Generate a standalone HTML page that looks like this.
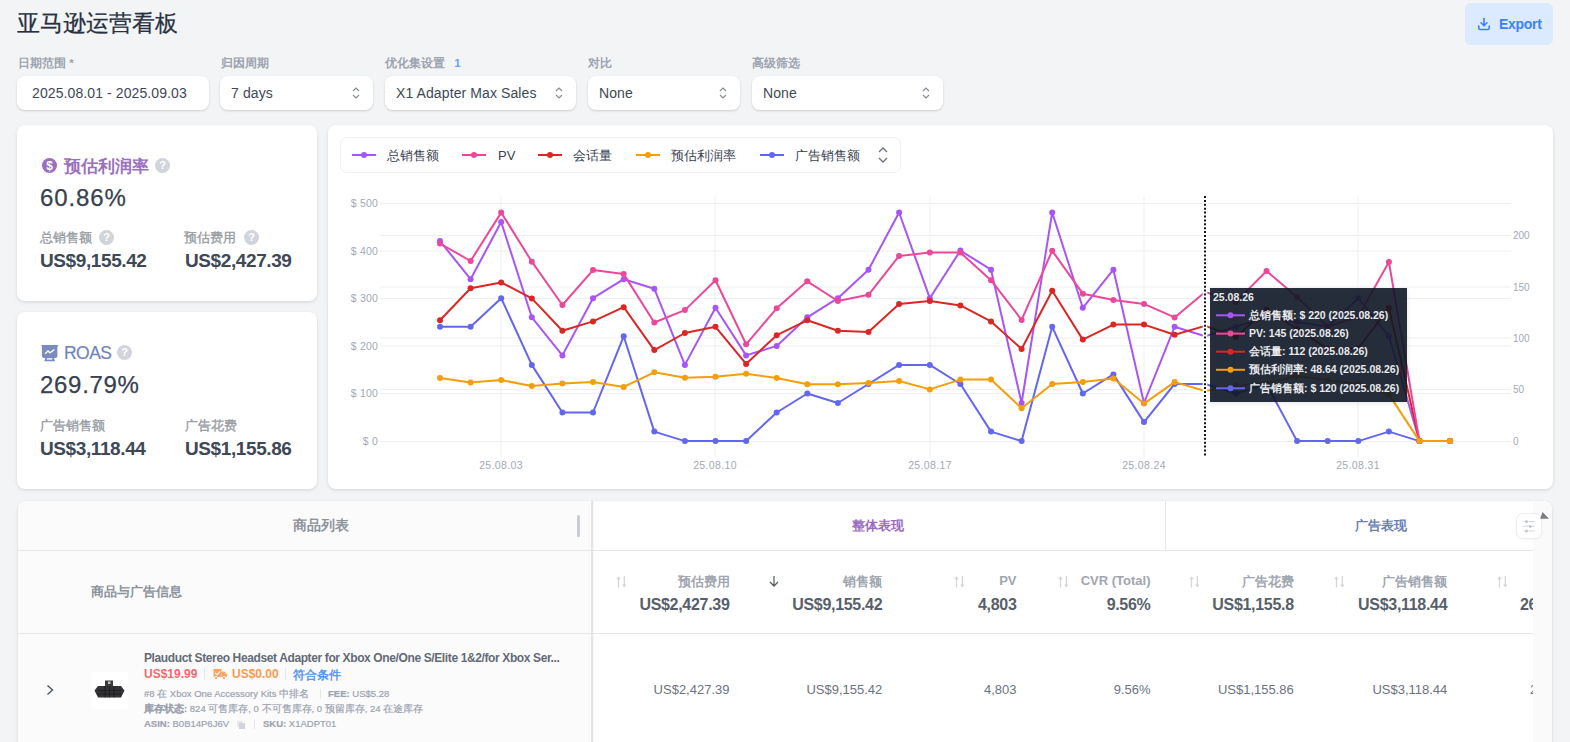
<!DOCTYPE html>
<html><head><meta charset="utf-8">
<style>
*{box-sizing:border-box;margin:0;padding:0}
html,body{width:1570px;height:742px;overflow:hidden;background:#f3f4f6;font-family:"Liberation Sans",sans-serif;color:#374151}
.a{position:absolute;white-space:nowrap}
.card{position:absolute;background:#fff;border-radius:8px;box-shadow:0 1px 3px rgba(0,0,0,.09),0 2px 6px rgba(0,0,0,.04)}
.lbl{font-size:11.5px;color:#9ca3af;font-weight:bold}
.inp{position:absolute;top:76px;height:34px;background:#fff;border-radius:8px;box-shadow:0 1px 3px rgba(0,0,0,.10),0 1px 2px rgba(0,0,0,.06);font-size:14px;color:#404856;line-height:34px;padding-left:15px;letter-spacing:0.1px}
.chev{position:absolute;right:12px;top:10px}
.q{display:inline-block;width:15px;height:15px;border-radius:50%;background:#d1d5db;color:#fff;font-size:11px;font-weight:bold;text-align:center;line-height:15px}
.ax{font-size:10px;color:#9ca3af}
.leg{font-size:13px;color:#374151}
.th{font-size:13px;font-weight:bold;color:#a0a6b0}
.tv{font-size:16px;font-weight:bold;color:#575f6b;letter-spacing:-0.3px}
.td{font-size:13px;color:#6b7280}
.sort{font-size:12px;color:#c0c4cc}
</style></head><body>

<div class="a" style="left:17px;top:8px;font-size:23.3px;color:#273140;line-height:30.5px;-webkit-text-stroke:0.25px #273140">亚马逊运营看板</div>

<div class="a" style="left:1465px;top:3px;width:88px;height:42px;background:#dbeafe;border-radius:6px"></div>
<svg class="a" style="left:1477px;top:17px" width="14" height="14" viewBox="0 0 14 14"><path d="M7 1.5v7M4 5.8l3 3 3-3M1.8 9v2.2c0 .8.5 1.3 1.3 1.3h7.8c.8 0 1.3-.5 1.3-1.3V9" fill="none" stroke="#3b82f6" stroke-width="1.6" stroke-linecap="round" stroke-linejoin="round"/></svg>
<div class="a" style="left:1499px;top:15px;font-size:14px;font-weight:bold;color:#3b82f6;line-height:18px;letter-spacing:-0.3px">Export</div>

<!-- filters -->
<div class="a lbl" style="left:18px;top:56px">日期范围 *</div>
<div class="a lbl" style="left:221px;top:56px">归因周期</div>
<div class="a lbl" style="left:385px;top:56px">优化集设置 <span style="color:#6fa0f5;margin-left:6px">1</span></div>
<div class="a lbl" style="left:588px;top:56px">对比</div>
<div class="a lbl" style="left:752px;top:56px">高级筛选</div>

<div class="inp" style="left:17px;width:192px">2025.08.01 - 2025.09.03</div>
<div class="inp" style="left:220px;width:153px;padding-left:11px">7 days<svg class="chev" width="10" height="14" viewBox="0 0 10 14"><path d="M2 5l3-3 3 3M2 9l3 3 3-3" fill="none" stroke="#858c96" stroke-width="1.2"/></svg></div>
<div class="inp" style="left:385px;width:191px;padding-left:11px">X1 Adapter Max Sales<svg class="chev" width="10" height="14" viewBox="0 0 10 14"><path d="M2 5l3-3 3 3M2 9l3 3 3-3" fill="none" stroke="#858c96" stroke-width="1.2"/></svg></div>
<div class="inp" style="left:588px;width:152px;padding-left:11px">None<svg class="chev" width="10" height="14" viewBox="0 0 10 14"><path d="M2 5l3-3 3 3M2 9l3 3 3-3" fill="none" stroke="#858c96" stroke-width="1.2"/></svg></div>
<div class="inp" style="left:752px;width:191px;padding-left:11px">None<svg class="chev" width="10" height="14" viewBox="0 0 10 14"><path d="M2 5l3-3 3 3M2 9l3 3 3-3" fill="none" stroke="#858c96" stroke-width="1.2"/></svg></div>

<!-- profit card -->
<div class="card" style="left:17px;top:125px;width:300px;height:176px"></div>
<svg class="a" style="left:42px;top:158px" width="15" height="15" viewBox="0 0 15 15"><circle cx="7.5" cy="7.5" r="7.5" fill="#9a6fc0"/><text x="7.5" y="11.8" font-size="12" font-weight="bold" fill="#fff" text-anchor="middle" font-family="Liberation Sans">$</text></svg>
<div class="a" style="left:63.5px;top:156px;font-size:17.3px;font-weight:bold;color:#9a6fc0;line-height:20px">预估利润率</div>
<div class="a q" style="left:155px;top:158px">?</div>
<div class="a" style="left:40px;top:184px;font-size:24px;color:#374151;line-height:28px;letter-spacing:0.9px;-webkit-text-stroke:0.25px #374151">60.86%</div>
<div class="a" style="left:40px;top:229px;font-size:13px;color:#979ca5;line-height:17px;-webkit-text-stroke:0.35px #979ca5">总销售额</div>
<div class="a q" style="left:99px;top:230px">?</div>
<div class="a" style="left:40px;top:250px;font-size:19px;font-weight:bold;color:#3e4856;line-height:22px;letter-spacing:-0.4px">US$9,155.42</div>
<div class="a" style="left:184px;top:229px;font-size:13px;color:#979ca5;line-height:17px;-webkit-text-stroke:0.35px #979ca5">预估费用</div>
<div class="a q" style="left:244px;top:230px">?</div>
<div class="a" style="left:185px;top:250px;font-size:19px;font-weight:bold;color:#3e4856;line-height:22px;letter-spacing:-0.4px">US$2,427.39</div>

<!-- roas card -->
<div class="card" style="left:17px;top:312px;width:300px;height:177px"></div>
<svg class="a" style="left:41px;top:344px" width="18" height="18" viewBox="0 0 18 18"><rect x="0.4" y="1" width="16.7" height="1.3" fill="#7a8bc0"/><path d="M1 2H16.4V12Q16.4 14 14.4 14H3Q1 14 1 12Z" fill="#7a8bc0"/><path d="M4 9.8L7 7L9 8.8L13.4 5.4" fill="none" stroke="#fff" stroke-width="1.3"/><path d="M4.3 14H13L14 17.3H3.3Z" fill="#7a8bc0"/><rect x="5.9" y="14.2" width="5.4" height="1.4" fill="#fff"/></svg>
<div class="a" style="left:64px;top:343px;font-size:17.5px;color:#7283bb;line-height:20px;letter-spacing:-0.55px;-webkit-text-stroke:0.2px #7283bb">ROAS</div>
<div class="a q" style="left:117px;top:345px">?</div>
<div class="a" style="left:40px;top:371px;font-size:24px;color:#374151;line-height:28px;letter-spacing:0.7px;-webkit-text-stroke:0.25px #374151">269.79%</div>
<div class="a" style="left:40px;top:417px;font-size:13px;color:#979ca5;line-height:17px;-webkit-text-stroke:0.35px #979ca5">广告销售额</div>
<div class="a" style="left:40px;top:438px;font-size:19px;font-weight:bold;color:#3e4856;line-height:22px;letter-spacing:-0.4px">US$3,118.44</div>
<div class="a" style="left:185px;top:417px;font-size:13px;color:#979ca5;line-height:17px;-webkit-text-stroke:0.35px #979ca5">广告花费</div>
<div class="a" style="left:185px;top:438px;font-size:19px;font-weight:bold;color:#3e4856;line-height:22px;letter-spacing:-0.4px">US$1,155.86</div>

<!-- chart card -->
<div class="card" style="left:328px;top:125px;width:1225px;height:364px"></div>
<div class="a" style="left:340px;top:137px;width:561px;height:36px;border:1px solid #eef0f3;border-radius:7px"></div>

<svg class="a" style="left:0;top:0" width="1570" height="500" viewBox="0 0 1570 500"><defs><filter id="blur" x="-10%" y="-10%" width="120%" height="120%"><feGaussianBlur stdDeviation="2"/></filter></defs>
<g stroke="#eeeff2" stroke-width="1">
<path d="M380 203.5H1511M380 251H1511M380 298.5H1511M380 346H1511M380 393.5H1511M380 441.5H1511"/>
<path d="M380 235.5H1511M380 287H1511M380 338H1511M380 389.5H1511"/>
<path d="M501 196V457M715 196V457M930 196V457M1144 196V457M1358 196V457"/>
</g>
<g font-family="Liberation Sans" font-size="10.5" fill="#a3a9b4" text-anchor="end" letter-spacing="0.2">
<text x="378" y="207">$ 500</text><text x="378" y="255">$ 400</text><text x="378" y="302">$ 300</text><text x="378" y="350">$ 200</text><text x="378" y="397">$ 100</text><text x="378" y="445">$ 0</text>
</g>
<g font-family="Liberation Sans" font-size="10" fill="#a3a9b4">
<text x="1513" y="239">200</text><text x="1513" y="291">150</text><text x="1513" y="342">100</text><text x="1513" y="393">50</text><text x="1513" y="445">0</text>
</g>
<g font-family="Liberation Sans" font-size="10.5" fill="#a3a9b4" text-anchor="middle" letter-spacing="0.35" style="-webkit-text-stroke:0.2px #a3a9b4">
<text x="501" y="469">25.08.03</text><text x="715" y="469">25.08.10</text><text x="930" y="469">25.08.17</text><text x="1144" y="469">25.08.24</text><text x="1358" y="469">25.08.31</text>
</g>
<!-- legend -->
<g stroke-width="2">
<path d="M352 155h24" stroke="#a855f7"/><circle cx="364" cy="155" r="3" fill="#a855f7"/>
<path d="M462 155h24" stroke="#ec4899"/><circle cx="474" cy="155" r="3" fill="#ec4899"/>
<path d="M538 155h24" stroke="#dc2626"/><circle cx="550" cy="155" r="3" fill="#dc2626"/>
<path d="M636 155h24" stroke="#f59e0b"/><circle cx="648" cy="155" r="3" fill="#f59e0b"/>
<path d="M760 155h24" stroke="#6366f1"/><circle cx="772" cy="155" r="3" fill="#6366f1"/>
</g>
<g font-family="Liberation Sans" font-size="13" fill="#374151">
<text x="387" y="160">总销售额</text><text x="498" y="160">PV</text><text x="573" y="160">会话量</text><text x="671" y="160">预估利润率</text><text x="795" y="160">广告销售额</text>
</g>
<path d="M879 152l4-4 4 4M879 158l4 4 4-4" fill="none" stroke="#6b7280" stroke-width="1.3"/>
<g fill="#6366f1"><polyline points="440.0,326.8 470.6,326.8 501.2,298.2 531.8,364.9 562.4,412.5 593.0,412.5 623.7,336.3 654.3,431.6 684.9,441.1 715.5,441.1 746.1,441.1 776.7,412.5 807.3,393.5 837.9,403.0 868.5,384.0 899.1,364.9 929.8,364.9 960.4,384.0 991.0,431.6 1021.6,441.1 1052.2,326.8 1082.8,393.5 1113.4,374.4 1144.0,422.1 1174.6,384.0 1205.2,384.0 1235.9,393.5 1266.5,384.0 1297.1,441.1 1327.7,441.1 1358.3,441.1 1388.9,431.6 1419.5,441.1 1450.1,441.1" fill="none" stroke="#6366f1" stroke-width="2" stroke-linejoin="round"/><circle cx="440.0" cy="326.8" r="3"/><circle cx="470.6" cy="326.8" r="3"/><circle cx="501.2" cy="298.2" r="3"/><circle cx="531.8" cy="364.9" r="3"/><circle cx="562.4" cy="412.5" r="3"/><circle cx="593.0" cy="412.5" r="3"/><circle cx="623.7" cy="336.3" r="3"/><circle cx="654.3" cy="431.6" r="3"/><circle cx="684.9" cy="441.1" r="3"/><circle cx="715.5" cy="441.1" r="3"/><circle cx="746.1" cy="441.1" r="3"/><circle cx="776.7" cy="412.5" r="3"/><circle cx="807.3" cy="393.5" r="3"/><circle cx="837.9" cy="403.0" r="3"/><circle cx="868.5" cy="384.0" r="3"/><circle cx="899.1" cy="364.9" r="3"/><circle cx="929.8" cy="364.9" r="3"/><circle cx="960.4" cy="384.0" r="3"/><circle cx="991.0" cy="431.6" r="3"/><circle cx="1021.6" cy="441.1" r="3"/><circle cx="1052.2" cy="326.8" r="3"/><circle cx="1082.8" cy="393.5" r="3"/><circle cx="1113.4" cy="374.4" r="3"/><circle cx="1144.0" cy="422.1" r="3"/><circle cx="1174.6" cy="384.0" r="3"/><circle cx="1235.9" cy="393.5" r="3"/><circle cx="1266.5" cy="384.0" r="3"/><circle cx="1297.1" cy="441.1" r="3"/><circle cx="1327.7" cy="441.1" r="3"/><circle cx="1358.3" cy="441.1" r="3"/><circle cx="1388.9" cy="431.6" r="3"/><circle cx="1419.5" cy="441.1" r="3"/><circle cx="1450.1" cy="441.1" r="3"/></g>
<g fill="#a855f7"><polyline points="440.0,241.1 470.6,279.2 501.2,222.0 531.8,317.3 562.4,355.4 593.0,298.2 623.7,279.2 654.3,288.7 684.9,364.9 715.5,307.8 746.1,355.4 776.7,345.9 807.3,317.3 837.9,298.2 868.5,269.7 899.1,212.5 929.8,298.2 960.4,250.6 991.0,269.7 1021.6,403.0 1052.2,212.5 1082.8,307.8 1113.4,269.7 1144.0,403.0 1174.6,326.8 1205.2,336.3 1235.9,326.8 1266.5,317.3 1297.1,322.1 1327.7,326.8 1358.3,298.2 1388.9,336.3 1419.5,441.1 1450.1,441.1" fill="none" stroke="#a855f7" stroke-width="2" stroke-linejoin="round"/><circle cx="440.0" cy="241.1" r="3"/><circle cx="470.6" cy="279.2" r="3"/><circle cx="501.2" cy="222.0" r="3"/><circle cx="531.8" cy="317.3" r="3"/><circle cx="562.4" cy="355.4" r="3"/><circle cx="593.0" cy="298.2" r="3"/><circle cx="623.7" cy="279.2" r="3"/><circle cx="654.3" cy="288.7" r="3"/><circle cx="684.9" cy="364.9" r="3"/><circle cx="715.5" cy="307.8" r="3"/><circle cx="746.1" cy="355.4" r="3"/><circle cx="776.7" cy="345.9" r="3"/><circle cx="807.3" cy="317.3" r="3"/><circle cx="837.9" cy="298.2" r="3"/><circle cx="868.5" cy="269.7" r="3"/><circle cx="899.1" cy="212.5" r="3"/><circle cx="929.8" cy="298.2" r="3"/><circle cx="960.4" cy="250.6" r="3"/><circle cx="991.0" cy="269.7" r="3"/><circle cx="1021.6" cy="403.0" r="3"/><circle cx="1052.2" cy="212.5" r="3"/><circle cx="1082.8" cy="307.8" r="3"/><circle cx="1113.4" cy="269.7" r="3"/><circle cx="1144.0" cy="403.0" r="3"/><circle cx="1174.6" cy="326.8" r="3"/><circle cx="1235.9" cy="326.8" r="3"/><circle cx="1266.5" cy="317.3" r="3"/><circle cx="1297.1" cy="322.1" r="3"/><circle cx="1327.7" cy="326.8" r="3"/><circle cx="1358.3" cy="298.2" r="3"/><circle cx="1388.9" cy="336.3" r="3"/><circle cx="1419.5" cy="441.1" r="3"/><circle cx="1450.1" cy="441.1" r="3"/></g>
<g fill="#dc2626"><polyline points="440.0,320.3 470.6,288.3 501.2,282.4 531.8,298.4 562.4,330.8 593.0,321.4 623.7,307.2 654.3,350.1 684.9,333.0 715.5,326.8 746.1,363.9 776.7,335.2 807.3,320.3 837.9,330.8 868.5,331.9 899.1,303.9 929.8,301.0 960.4,305.4 991.0,321.4 1021.6,349.0 1052.2,290.8 1082.8,339.6 1113.4,324.6 1144.0,324.6 1174.6,334.8 1205.2,325.9 1235.9,336.9 1266.5,309.8 1297.1,329.0 1327.7,348.6 1358.3,348.3 1388.9,308.0 1419.5,441.1 1450.1,441.1" fill="none" stroke="#dc2626" stroke-width="2" stroke-linejoin="round"/><circle cx="440.0" cy="320.3" r="3"/><circle cx="470.6" cy="288.3" r="3"/><circle cx="501.2" cy="282.4" r="3"/><circle cx="531.8" cy="298.4" r="3"/><circle cx="562.4" cy="330.8" r="3"/><circle cx="593.0" cy="321.4" r="3"/><circle cx="623.7" cy="307.2" r="3"/><circle cx="654.3" cy="350.1" r="3"/><circle cx="684.9" cy="333.0" r="3"/><circle cx="715.5" cy="326.8" r="3"/><circle cx="746.1" cy="363.9" r="3"/><circle cx="776.7" cy="335.2" r="3"/><circle cx="807.3" cy="320.3" r="3"/><circle cx="837.9" cy="330.8" r="3"/><circle cx="868.5" cy="331.9" r="3"/><circle cx="899.1" cy="303.9" r="3"/><circle cx="929.8" cy="301.0" r="3"/><circle cx="960.4" cy="305.4" r="3"/><circle cx="991.0" cy="321.4" r="3"/><circle cx="1021.6" cy="349.0" r="3"/><circle cx="1052.2" cy="290.8" r="3"/><circle cx="1082.8" cy="339.6" r="3"/><circle cx="1113.4" cy="324.6" r="3"/><circle cx="1144.0" cy="324.6" r="3"/><circle cx="1174.6" cy="334.8" r="3"/><circle cx="1235.9" cy="336.9" r="3"/><circle cx="1266.5" cy="309.8" r="3"/><circle cx="1297.1" cy="329.0" r="3"/><circle cx="1327.7" cy="348.6" r="3"/><circle cx="1358.3" cy="348.3" r="3"/><circle cx="1388.9" cy="308.0" r="3"/><circle cx="1419.5" cy="441.1" r="3"/><circle cx="1450.1" cy="441.1" r="3"/></g>
<g fill="#ec4899"><polyline points="440.0,243.5 470.6,261.0 501.2,212.6 531.8,261.7 562.4,305.0 593.0,270.1 623.7,274.1 654.3,322.5 684.9,310.1 715.5,280.2 746.1,344.3 776.7,308.3 807.3,281.3 837.9,301.0 868.5,294.8 899.1,255.9 929.8,252.6 960.4,252.6 991.0,280.2 1021.6,319.9 1052.2,250.8 1082.8,293.7 1113.4,299.9 1144.0,303.9 1174.6,317.4 1205.2,292.0 1235.9,301.9 1266.5,271.0 1297.1,297.0 1327.7,326.7 1358.3,316.5 1388.9,262.0 1419.5,441.1 1450.1,441.1" fill="none" stroke="#ec4899" stroke-width="2" stroke-linejoin="round"/><circle cx="440.0" cy="243.5" r="3"/><circle cx="470.6" cy="261.0" r="3"/><circle cx="501.2" cy="212.6" r="3"/><circle cx="531.8" cy="261.7" r="3"/><circle cx="562.4" cy="305.0" r="3"/><circle cx="593.0" cy="270.1" r="3"/><circle cx="623.7" cy="274.1" r="3"/><circle cx="654.3" cy="322.5" r="3"/><circle cx="684.9" cy="310.1" r="3"/><circle cx="715.5" cy="280.2" r="3"/><circle cx="746.1" cy="344.3" r="3"/><circle cx="776.7" cy="308.3" r="3"/><circle cx="807.3" cy="281.3" r="3"/><circle cx="837.9" cy="301.0" r="3"/><circle cx="868.5" cy="294.8" r="3"/><circle cx="899.1" cy="255.9" r="3"/><circle cx="929.8" cy="252.6" r="3"/><circle cx="960.4" cy="252.6" r="3"/><circle cx="991.0" cy="280.2" r="3"/><circle cx="1021.6" cy="319.9" r="3"/><circle cx="1052.2" cy="250.8" r="3"/><circle cx="1082.8" cy="293.7" r="3"/><circle cx="1113.4" cy="299.9" r="3"/><circle cx="1144.0" cy="303.9" r="3"/><circle cx="1174.6" cy="317.4" r="3"/><circle cx="1235.9" cy="301.9" r="3"/><circle cx="1266.5" cy="271.0" r="3"/><circle cx="1297.1" cy="297.0" r="3"/><circle cx="1327.7" cy="326.7" r="3"/><circle cx="1358.3" cy="316.5" r="3"/><circle cx="1388.9" cy="262.0" r="3"/><circle cx="1419.5" cy="441.1" r="3"/><circle cx="1450.1" cy="441.1" r="3"/></g>
<g fill="#f59e0b"><polyline points="440.0,378.1 470.6,382.5 501.2,380.0 531.8,386.1 562.4,383.6 593.0,382.1 623.7,386.9 654.3,372.3 684.9,377.8 715.5,376.7 746.1,373.8 776.7,378.1 807.3,384.3 837.9,384.3 868.5,382.9 899.1,381.0 929.8,389.4 960.4,379.6 991.0,379.6 1021.6,408.3 1052.2,384.0 1082.8,382.1 1113.4,378.5 1144.0,403.6 1174.6,382.1 1205.2,391.0 1235.9,386.0 1266.5,383.3 1297.1,376.0 1327.7,380.0 1358.3,384.0 1388.9,394.4 1419.5,441.1 1450.1,441.1" fill="none" stroke="#f59e0b" stroke-width="2" stroke-linejoin="round"/><circle cx="440.0" cy="378.1" r="3"/><circle cx="470.6" cy="382.5" r="3"/><circle cx="501.2" cy="380.0" r="3"/><circle cx="531.8" cy="386.1" r="3"/><circle cx="562.4" cy="383.6" r="3"/><circle cx="593.0" cy="382.1" r="3"/><circle cx="623.7" cy="386.9" r="3"/><circle cx="654.3" cy="372.3" r="3"/><circle cx="684.9" cy="377.8" r="3"/><circle cx="715.5" cy="376.7" r="3"/><circle cx="746.1" cy="373.8" r="3"/><circle cx="776.7" cy="378.1" r="3"/><circle cx="807.3" cy="384.3" r="3"/><circle cx="837.9" cy="384.3" r="3"/><circle cx="868.5" cy="382.9" r="3"/><circle cx="899.1" cy="381.0" r="3"/><circle cx="929.8" cy="389.4" r="3"/><circle cx="960.4" cy="379.6" r="3"/><circle cx="991.0" cy="379.6" r="3"/><circle cx="1021.6" cy="408.3" r="3"/><circle cx="1052.2" cy="384.0" r="3"/><circle cx="1082.8" cy="382.1" r="3"/><circle cx="1113.4" cy="378.5" r="3"/><circle cx="1144.0" cy="403.6" r="3"/><circle cx="1174.6" cy="382.1" r="3"/><circle cx="1235.9" cy="386.0" r="3"/><circle cx="1266.5" cy="383.3" r="3"/><circle cx="1297.1" cy="376.0" r="3"/><circle cx="1327.7" cy="380.0" r="3"/><circle cx="1358.3" cy="384.0" r="3"/><circle cx="1388.9" cy="394.4" r="3"/><circle cx="1419.5" cy="441.1" r="3"/><circle cx="1450.1" cy="441.1" r="3"/></g>
<path d="M1205 196V457" stroke="#fff" stroke-width="4.5"/><path d="M1205 196V457" stroke="#151515" stroke-width="2" stroke-dasharray="2 1.9"/>
<rect x="1211" y="290" width="197" height="114" fill="#000" fill-opacity="0.08" filter="url(#blur)"/><rect x="1210" y="288" width="197" height="114" fill="#111827" fill-opacity="0.9"/>
<g font-family="Liberation Sans" font-size="10.5" fill="#e8eaed" font-weight="bold">
<text x="1213" y="301">25.08.26</text>
<text x="1249" y="319">总销售额: $ 220 (2025.08.26)</text>
<text x="1249" y="337">PV: 145 (2025.08.26)</text>
<text x="1249" y="355">会话量: 112 (2025.08.26)</text>
<text x="1249" y="373">预估利润率: 48.64 (2025.08.26)</text>
<text x="1249" y="392">广告销售额: $ 120 (2025.08.26)</text>
</g>
<g stroke-width="2">
<path d="M1216 315.3h29" stroke="#a855f7"/><circle cx="1230.5" cy="315.3" r="3" fill="#a855f7"/>
<path d="M1216 333.6h29" stroke="#ec4899"/><circle cx="1230.5" cy="333.6" r="3" fill="#ec4899"/>
<path d="M1216 351.7h29" stroke="#dc2626"/><circle cx="1230.5" cy="351.7" r="3" fill="#dc2626"/>
<path d="M1216 369.8h29" stroke="#f59e0b"/><circle cx="1230.5" cy="369.8" r="3" fill="#f59e0b"/>
<path d="M1216 388.3h29" stroke="#6366f1"/><circle cx="1230.5" cy="388.3" r="3" fill="#6366f1"/>
</g>
</svg>

<!-- table -->
<div class="card" style="left:18px;top:501px;width:1534px;height:260px;border-radius:8px"></div>
<div class="a" style="left:18px;top:501px;width:574px;height:241px;background:#fbfbfc;border-radius:8px 0 0 0"></div>
<div class="a" style="left:18px;top:550px;width:1515px;height:1px;background:#e5e7eb"></div>
<div class="a" style="left:18px;top:633px;width:1515px;height:1px;background:#e5e7eb"></div>
<div class="a" style="left:591px;top:501px;width:1.5px;height:241px;background:#e3e5e8;box-shadow:1px 0 2px rgba(0,0,0,.05)"></div>
<div class="a" style="left:1165px;top:501px;width:1px;height:49px;background:#e5e7eb"></div>
<div class="a" style="left:293px;top:517px;font-size:13.5px;font-weight:bold;color:#8d939b">商品列表</div>
<div class="a" style="left:577px;top:515px;width:3px;height:22px;background:#c9ccd1;border-radius:2px"></div>
<div class="a" style="left:91px;top:583px;font-size:13.2px;font-weight:bold;color:#8d939b">商品与广告信息</div>
<div class="a" style="left:852px;top:517px;font-size:13px;font-weight:bold;color:#9b6bc2">整体表现</div>
<div class="a" style="left:1355px;top:517px;font-size:13px;font-weight:bold;color:#6b7fb5">广告表现</div>

<!-- table headers -->
<svg class="a" style="left:615px;top:575px" width="12" height="13" viewBox="0 0 12 13"><path d="M3.5 12.5V3M9.3 1V10" fill="none" stroke="#d3d6da" stroke-width="1.3"/><path d="M1.2 4.2L3.5 1.2L5.8 4.2zM7 9.5L9.3 12.5L11.6 9.5z" fill="#d3d6da"/></svg>
<div class="a th" style="right:840.5px;top:573px">预估费用</div>
<div class="a tv" style="right:840.5px;top:595.5px">US$2,427.39</div>
<div class="a td" style="right:840.5px;top:682px">US$2,427.39</div>
<div class="a th" style="right:687.7px;top:573px">销售额</div>
<div class="a tv" style="right:687.7px;top:595.5px">US$9,155.42</div>
<div class="a td" style="right:687.7px;top:682px">US$9,155.42</div>
<svg class="a" style="left:953px;top:575px" width="12" height="13" viewBox="0 0 12 13"><path d="M3.5 12.5V3M9.3 1V10" fill="none" stroke="#d3d6da" stroke-width="1.3"/><path d="M1.2 4.2L3.5 1.2L5.8 4.2zM7 9.5L9.3 12.5L11.6 9.5z" fill="#d3d6da"/></svg>
<div class="a th" style="right:553.5px;top:573px">PV</div>
<div class="a tv" style="right:553.5px;top:595.5px">4,803</div>
<div class="a td" style="right:553.5px;top:682px">4,803</div>
<svg class="a" style="left:1057px;top:575px" width="12" height="13" viewBox="0 0 12 13"><path d="M3.5 12.5V3M9.3 1V10" fill="none" stroke="#d3d6da" stroke-width="1.3"/><path d="M1.2 4.2L3.5 1.2L5.8 4.2zM7 9.5L9.3 12.5L11.6 9.5z" fill="#d3d6da"/></svg>
<div class="a th" style="right:419.5px;top:573px">CVR (Total)</div>
<div class="a tv" style="right:419.5px;top:595.5px">9.56%</div>
<div class="a td" style="right:419.5px;top:682px">9.56%</div>
<svg class="a" style="left:1188px;top:575px" width="12" height="13" viewBox="0 0 12 13"><path d="M3.5 12.5V3M9.3 1V10" fill="none" stroke="#d3d6da" stroke-width="1.3"/><path d="M1.2 4.2L3.5 1.2L5.8 4.2zM7 9.5L9.3 12.5L11.6 9.5z" fill="#d3d6da"/></svg>
<div class="a th" style="right:276.2px;top:573px">广告花费</div>
<div class="a tv" style="right:276.2px;top:595.5px">US$1,155.8</div>
<div class="a td" style="right:276.2px;top:682px">US$1,155.86</div>
<svg class="a" style="left:1333px;top:575px" width="12" height="13" viewBox="0 0 12 13"><path d="M3.5 12.5V3M9.3 1V10" fill="none" stroke="#d3d6da" stroke-width="1.3"/><path d="M1.2 4.2L3.5 1.2L5.8 4.2zM7 9.5L9.3 12.5L11.6 9.5z" fill="#d3d6da"/></svg>
<div class="a th" style="right:122.7px;top:573px">广告销售额</div>
<div class="a tv" style="right:122.7px;top:595.5px">US$3,118.44</div>
<div class="a td" style="right:122.7px;top:682px">US$3,118.44</div>
<svg class="a" style="left:1496px;top:575px" width="12" height="13" viewBox="0 0 12 13"><path d="M3.5 12.5V3M9.3 1V10" fill="none" stroke="#d3d6da" stroke-width="1.3"/><path d="M1.2 4.2L3.5 1.2L5.8 4.2zM7 9.5L9.3 12.5L11.6 9.5z" fill="#d3d6da"/></svg>
<svg class="a" style="left:768px;top:575px" width="12" height="13" viewBox="0 0 12 13"><path d="M6 1v10M2 7l4 4 4-4" fill="none" stroke="#555b66" stroke-width="1.25"/></svg>
<div class="a tv" style="left:1520px;top:595.5px;width:13px;overflow:hidden">269</div>
<div class="a td" style="left:1530px;top:682px;width:3px;overflow:hidden">2</div>
<div class="a" style="left:1533px;top:501px;width:19px;height:241px;background:#fafafa;border-radius:0 8px 0 0"></div>
<div class="a" style="left:1517px;top:514px;width:24px;height:24px;border-radius:6px;background:#fff;box-shadow:0 0 0 1px #eceef1,0 1px 3px rgba(0,0,0,.06)"></div>
<svg class="a" style="left:1520px;top:517px" width="18" height="18" viewBox="0 0 18 18"><g stroke="#d3d7dc" stroke-width="1.1"><path d="M3 4.5h1.5M8.5 4.5h6M3 9.3h5.5M12 9.3h2.5M3 14h1.5M8.5 14h6"/></g><g fill="#c2c7ce"><circle cx="6.5" cy="4.5" r="1.5"/><circle cx="10.2" cy="9.3" r="1.5"/><circle cx="6.5" cy="14" r="1.5"/></g></svg>
<svg class="a" style="left:1539px;top:511px" width="11" height="9" viewBox="0 0 11 9"><path d="M3.5 1L10 7.8H1.2z" fill="#7b7d80"/></svg>
<!-- data row -->
<svg class="a" style="left:45px;top:684px" width="10" height="12" viewBox="0 0 10 12"><path d="M2.5 1.5l5 4.5-5 4.5" fill="none" stroke="#4b5563" stroke-width="1.4"/></svg>
<div class="a" style="left:91px;top:672px;width:37px;height:37px;background:#fff;border-radius:3px"></div>
<svg class="a" style="left:93px;top:679px" width="33" height="20" viewBox="0 0 33 20"><path d="M12 1.5H20V7H12z" fill="#3a3a3c"/><path d="M5 7H28L31.5 11.5L28 18.5H5L1.5 11.5z" fill="#333335"/><path d="M5 11.5H28M5 15H28M12 7V18.5M16.5 7V18.5M21 7V18.5" stroke="#1c1c1e" stroke-width="0.8"/><rect x="15" y="2.5" width="2.5" height="2.5" fill="#bbb"/></svg>
<div class="a" style="left:144px;top:650.5px;font-size:12px;font-weight:bold;color:#636a76;letter-spacing:-0.38px">Plauduct Stereo Headset Adapter for Xbox One/One S/Elite 1&amp;2/for Xbox Ser...</div>
<div class="a" style="left:144px;top:667px;font-size:12px;font-weight:bold;color:#f06a6e">US$19.99</div>
<div class="a" style="left:204px;top:668px;width:1px;height:12px;background:#e5e7eb"></div>
<svg class="a" style="left:212px;top:668px" width="16" height="12" viewBox="0 0 16 12"><path d="M1.5 1H9.5V9H1.5z" fill="#fba464"/><path d="M9.5 3.5H12.5L15 6.5V9H9.5z" fill="#fba464"/><path d="M3.3 5l1.8 1.8L8 3.3" fill="none" stroke="#fff" stroke-width="1.2"/><circle cx="4" cy="10" r="1.6" fill="#fba464" stroke="#fff" stroke-width="0.8"/><circle cx="12" cy="10" r="1.6" fill="#fba464" stroke="#fff" stroke-width="0.8"/></svg>
<div class="a" style="left:232px;top:667px;font-size:12px;font-weight:bold;color:#f99a52">US$0.00</div>
<div class="a" style="left:285px;top:668px;width:1px;height:12px;background:#e5e7eb"></div>
<div class="a" style="left:293px;top:667px;font-size:12px;font-weight:bold;color:#5898f3">符合条件</div>
<div class="a" style="left:144px;top:688px;font-size:9.5px;color:#9ca3af;-webkit-text-stroke:0.2px #9ca3af">#8 在 Xbox One Accessory Kits 中排名</div>
<div class="a" style="left:320px;top:689px;width:1px;height:10px;background:#e5e7eb"></div>
<div class="a" style="left:328px;top:688px;font-size:9.5px;color:#9ca3af;-webkit-text-stroke:0.2px #9ca3af"><b>FEE:</b> US$5.28</div>
<div class="a" style="left:144px;top:703px;font-size:9.5px;color:#9ca3af;-webkit-text-stroke:0.2px #9ca3af"><b>库存状态:</b> 824 可售库存, 0 不可售库存, 0 预留库存, 24 在途库存</div>
<div class="a" style="left:144px;top:718px;font-size:9.5px;color:#9ca3af;-webkit-text-stroke:0.2px #9ca3af"><b>ASIN:</b> B0B14P6J6V</div>
<svg class="a" style="left:236px;top:720px" width="10" height="10" viewBox="0 0 10 10"><rect x="1" y="1" width="6" height="6" fill="#e5e7eb"/><rect x="3" y="3" width="6" height="6" fill="#d1d5db"/></svg>
<div class="a" style="left:254px;top:719px;width:1px;height:10px;background:#e5e7eb"></div>
<div class="a" style="left:263px;top:718px;font-size:9.5px;color:#9ca3af;-webkit-text-stroke:0.2px #9ca3af"><b>SKU:</b> X1ADPT01</div>

</body></html>
